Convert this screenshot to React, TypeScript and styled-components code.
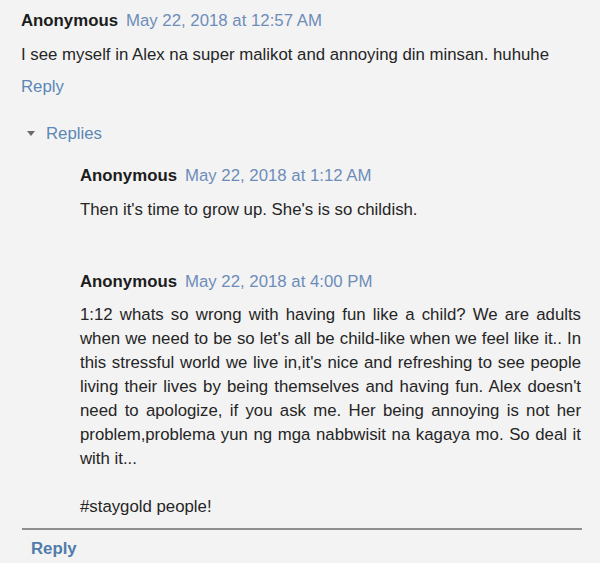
import React from "react";
import styled, { createGlobalStyle } from "styled-components";

const Global = createGlobalStyle`
  html, body { margin: 0; padding: 0; background: #f3f3f3; }
  body { font-family: "Liberation Sans", Arial, sans-serif; font-size: 16.8px; color: #222; }
`;

const Page = styled.div`
  width: 600px;
  height: 563px;
  background: #f3f3f3;
  padding-top: 9px;
  box-sizing: border-box;
  overflow: hidden;
`;

const Thread = styled.div`
  padding-left: 21px;
`;

const Header = styled.div<{ $mt?: number }>`
  display: flex;
  align-items: baseline;
  gap: 8px;
  line-height: 24px;
  margin-top: ${(p) => p.$mt ?? 0}px;
`;

const Name = styled.span`
  font-weight: bold;
  color: #1c1c1c;
`;

const DateLink = styled.span`
  color: #6d8db9;
`;

const Body = styled.p<{ $mt: number; $justify?: boolean }>`
  margin: ${(p) => p.$mt}px 0 0;
  line-height: 24px;
  color: #252525;
  text-align: ${(p) => (p.$justify ? "justify" : "left")};
`;

const ReplyLink = styled.div<{ $mt: number }>`
  margin-top: ${(p) => p.$mt}px;
  line-height: 24px;
  color: #5c87b6;
`;

const Toggle = styled.div`
  display: flex;
  align-items: center;
  margin-top: 23px;
  margin-left: 6px;
  line-height: 24px;
  color: #5c87b6;
  gap: 11px;
`;

const Caret = styled.span`
  width: 0;
  height: 0;
  border-left: 4px solid transparent;
  border-right: 4px solid transparent;
  border-top: 5px solid #6a6a6a;
  margin-top: -2px;
`;

const Nested = styled.div`
  padding-left: 59px;
  width: 501px;
`;

const Footer = styled.div`
  margin: 9px 18px 0 22px;
  border-top: 2px solid #8e8e8e;
  padding: 7px 0 0 9px;
`;

const BoldReply = styled.div`
  font-weight: bold;
  color: #4f7cab;
  line-height: 24px;
`;

export default function App() {
  return (
    <>
      <Global />
      <Page>
        <Thread>
          <Header>
            <Name>Anonymous</Name>
            <DateLink>May 22, 2018 at 12:57 AM</DateLink>
          </Header>
          <Body $mt={10}>I see myself in Alex na super malikot and annoying din minsan. huhuhe</Body>
          <ReplyLink $mt={8}>Reply</ReplyLink>
          <Toggle>
            <Caret />
            <span>Replies</span>
          </Toggle>
          <Nested>
            <Header $mt={18}>
              <Name>Anonymous</Name>
              <DateLink>May 22, 2018 at 1:12 AM</DateLink>
            </Header>
            <Body $mt={10}>Then it's time to grow up. She's is so childish.</Body>
            <Header $mt={48}>
              <Name>Anonymous</Name>
              <DateLink>May 22, 2018 at 4:00 PM</DateLink>
            </Header>
            <Body $mt={9} $justify>
              1:12 whats so wrong with having fun like a child? We are adults when we need to be so let's all be
              child-like when we feel like it.. In this stressful world we live in,it's nice and refreshing to see
              people living their lives by being themselves and having fun. Alex doesn't need to apologize, if you
              ask me. Her being annoying is not her problem,problema yun ng mga nabbwisit na kagaya mo. So deal it
              with it...
            </Body>
            <Body $mt={24}>#staygold people!</Body>
          </Nested>
        </Thread>
        <Footer>
          <BoldReply>Reply</BoldReply>
        </Footer>
      </Page>
    </>
  );
}
